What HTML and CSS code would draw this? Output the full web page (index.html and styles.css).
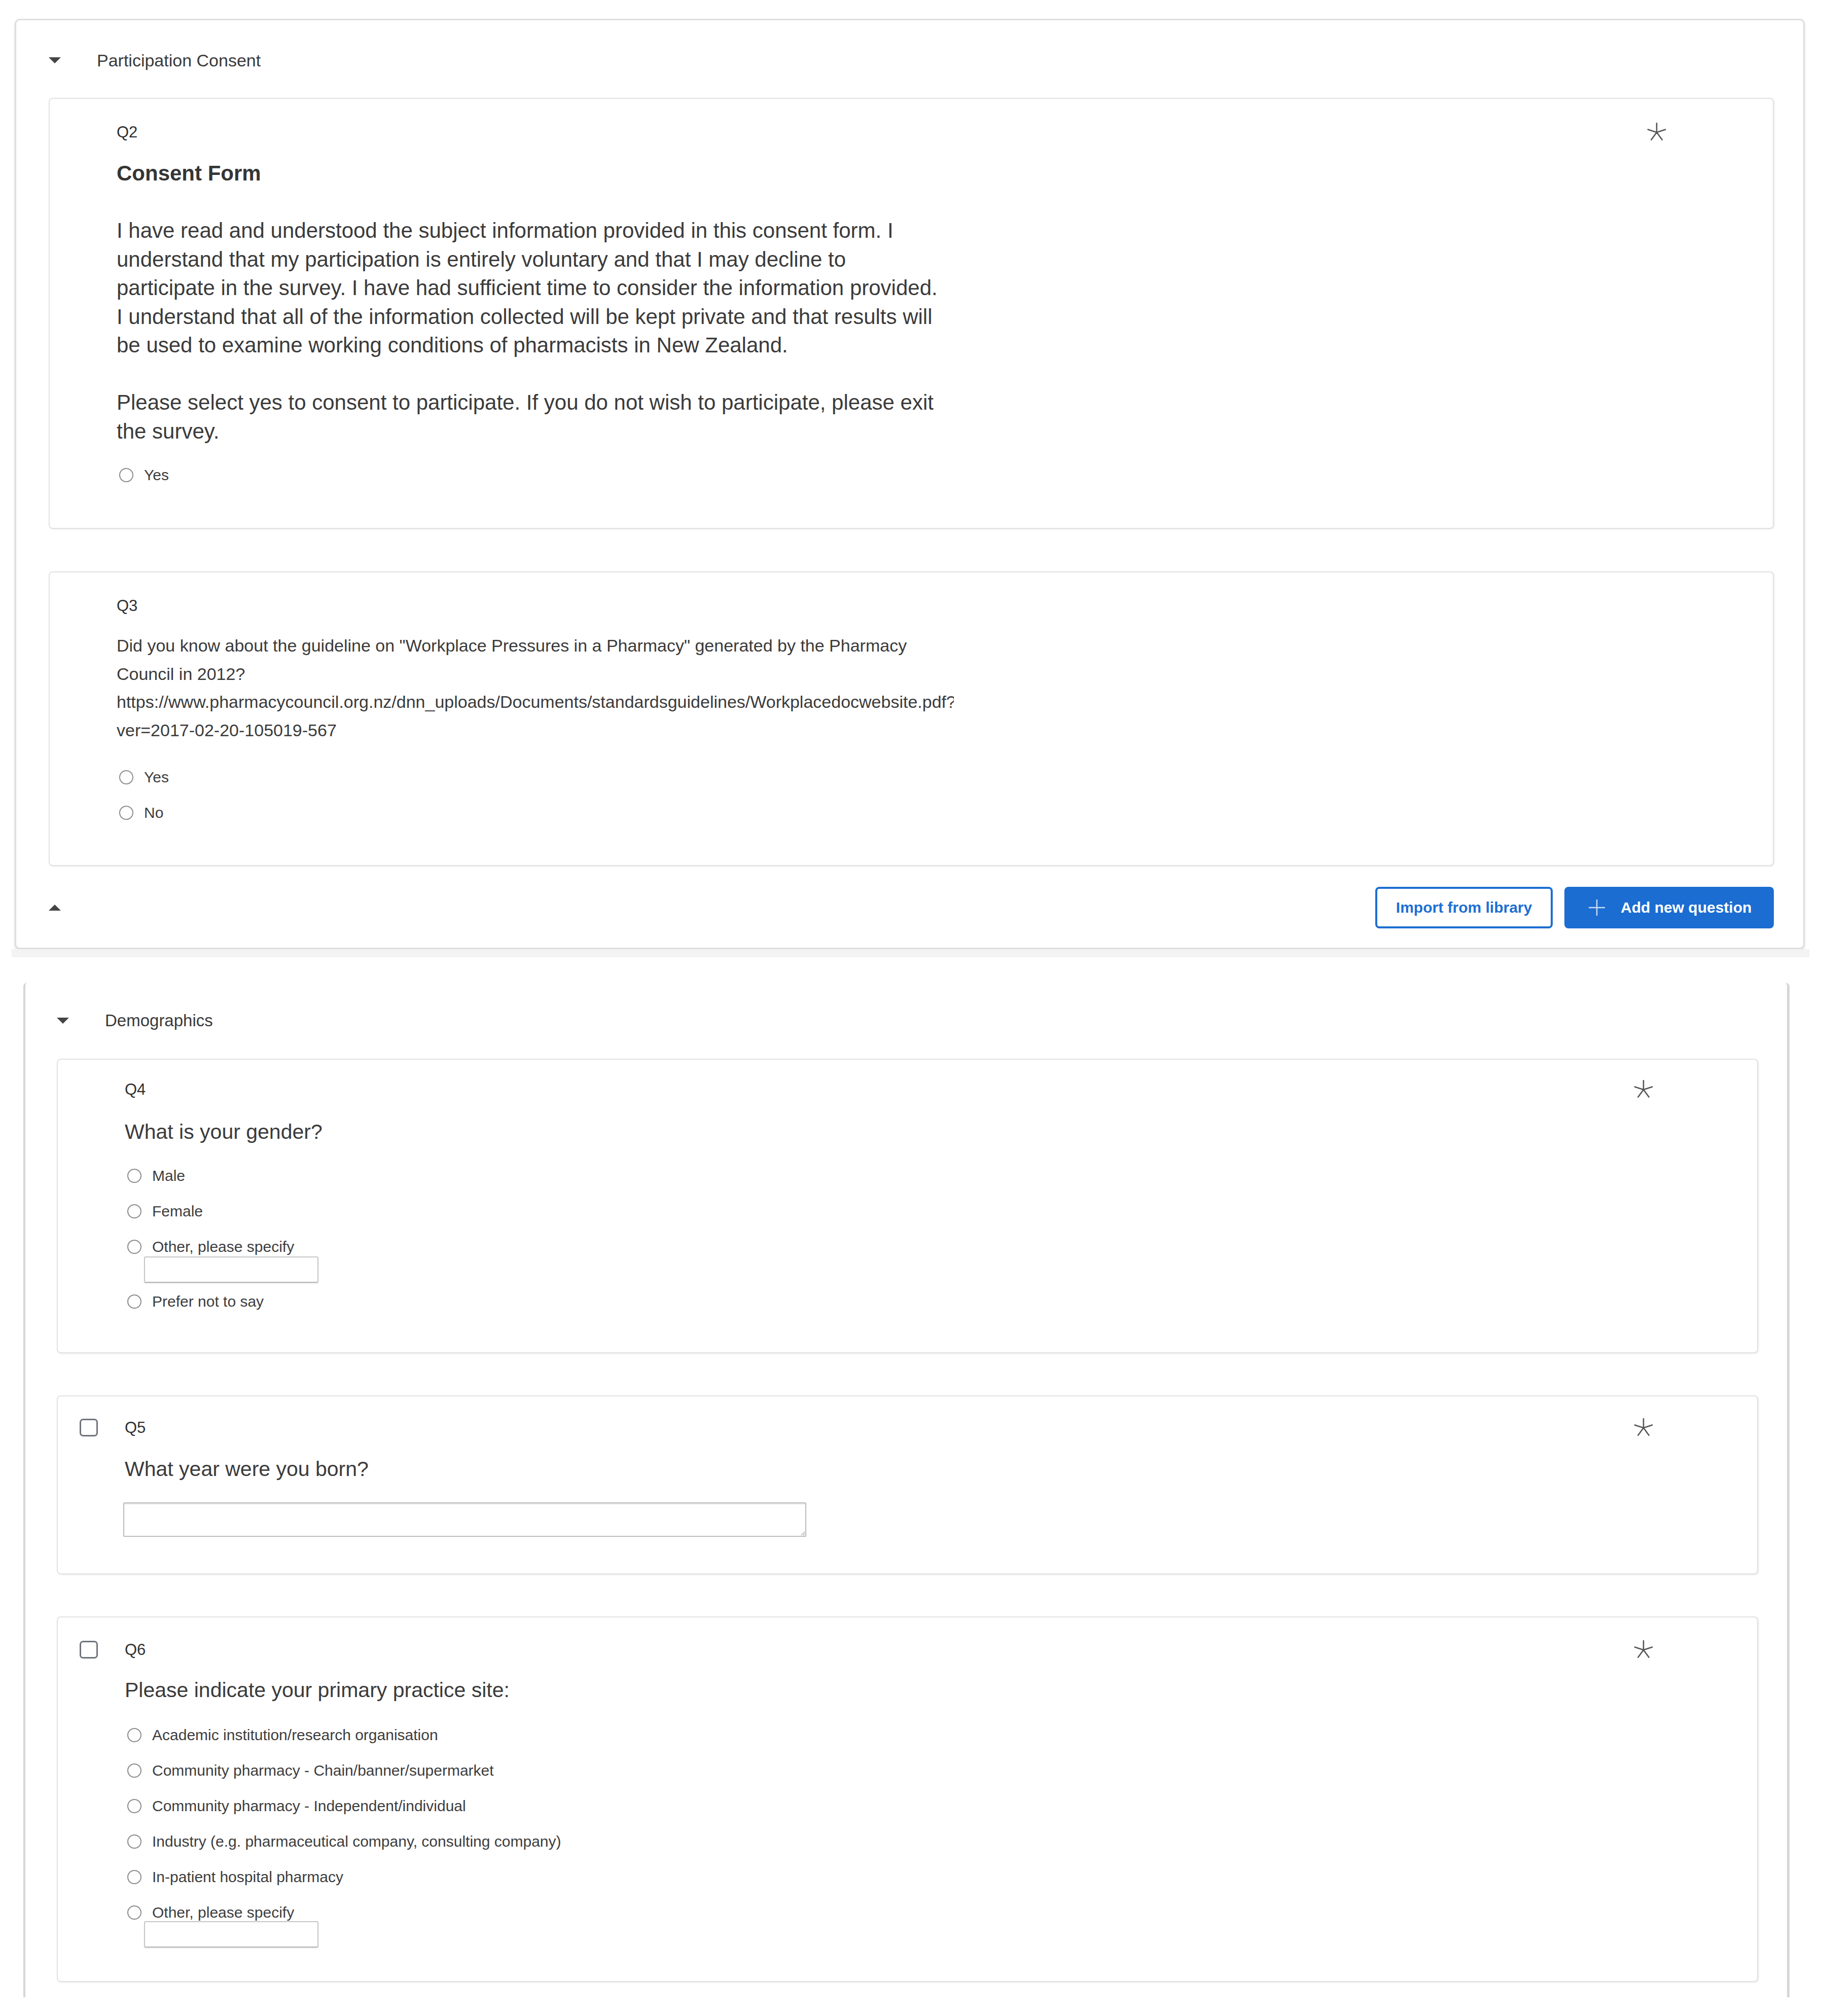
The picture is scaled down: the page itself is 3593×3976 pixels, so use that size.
FILE: index.html
```html
<!DOCTYPE html>
<html lang="en">
<head>
<meta charset="utf-8">
<title>Survey builder</title>
<link rel="stylesheet" href="styles.css">
</head>
<body>
<div class="shot shot-top">
  <section class="block block-top">
    <div class="sec-head">
      <svg class="caret" width="24" height="12" viewBox="0 0 24 12"><polygon points="0,0 24,0 12,12"/></svg>
      <span class="sec-title">Participation Consent</span>
    </div>

    <div class="qcard q2">
      <div class="gutter"></div>
      <div class="qhead">
        <span class="qlabel">Q2</span>
        <svg class="req" width="38" height="38" viewBox="0 0 38 38"><path d="M19 19V1M19 19L36.1 13.4M19 19L29.6 33.6M19 19L8.4 33.6M19 19L1.9 13.4"/></svg>
      </div>
      <div class="qbody">
        <div class="consent">
          <div class="consent-title">Consent Form</div>
          <div class="blank"></div>
          <div>I have read and understood the subject information provided in this consent form. I<br>understand that my participation is entirely voluntary and that I may decline to<br>participate in the survey. I have had sufficient time to consider the information provided.<br>I understand that all of the information collected will be kept private and that results will<br>be used to examine working conditions of pharmacists in New Zealand.</div>
          <div class="blank"></div>
          <div>Please select yes to consent to participate. If you do not wish to participate, please exit<br>the survey.</div>
        </div>
        <div class="opts opts-q2">
          <label class="opt"><span class="radio"></span><span>Yes</span></label>
        </div>
      </div>
    </div>

    <div class="qcard q3">
      <div class="gutter"></div>
      <div class="qhead">
        <span class="qlabel">Q3</span>
      </div>
      <div class="qbody">
        <div class="qtext-sm">Did you know about the guideline on "Workplace Pressures in a Pharmacy" generated by the Pharmacy<br>Council in 2012?<br>https://www.pharmacycouncil.org.nz/dnn_uploads/Documents/standardsguidelines/Workplacedocwebsite.pdf?<br>ver=2017-02-20-105019-567</div>
        <div class="opts opts-q3">
          <label class="opt"><span class="radio"></span><span>Yes</span></label>
          <label class="opt"><span class="radio"></span><span>No</span></label>
        </div>
      </div>
    </div>

    <div class="sec-foot">
      <svg class="caret" width="24" height="12" viewBox="0 0 24 12"><polygon points="0,12 24,12 12,0"/></svg>
      <div class="btns">
        <button class="btn btn-outline">Import from library</button>
        <button class="btn btn-primary"><svg class="plus" width="32" height="32" viewBox="0 0 32 32"><path d="M16 0V32M0 16H32"/></svg><span>Add new question</span></button>
      </div>
    </div>
  </section>
  <div class="shot-edge"></div>
</div>

<div class="shot shot-bottom">
  <section class="block block-bottom">
    <div class="sec-head sec-head-b">
      <svg class="caret" width="24" height="12" viewBox="0 0 24 12"><polygon points="0,0 24,0 12,12"/></svg>
      <span class="sec-title">Demographics</span>
    </div>

    <div class="qcard q4">
      <div class="gutter"></div>
      <div class="qhead">
        <span class="qlabel">Q4</span>
        <svg class="req" width="38" height="38" viewBox="0 0 38 38"><path d="M19 19V1M19 19L36.1 13.4M19 19L29.6 33.6M19 19L8.4 33.6M19 19L1.9 13.4"/></svg>
      </div>
      <div class="qbody">
        <div class="qtext-lg">What is your gender?</div>
        <div class="opts opts-q4">
          <label class="opt"><span class="radio"></span><span>Male</span></label>
          <label class="opt"><span class="radio"></span><span>Female</span></label>
          <label class="opt"><span class="radio"></span><span>Other, please specify</span></label>
          <div class="other-box"></div>
          <label class="opt opt-after-box"><span class="radio"></span><span>Prefer not to say</span></label>
        </div>
      </div>
    </div>

    <div class="qcard q5">
      <div class="gutter"><span class="check"></span></div>
      <div class="qhead">
        <span class="qlabel">Q5</span>
        <svg class="req" width="38" height="38" viewBox="0 0 38 38"><path d="M19 19V1M19 19L36.1 13.4M19 19L29.6 33.6M19 19L8.4 33.6M19 19L1.9 13.4"/></svg>
      </div>
      <div class="qbody">
        <div class="qtext-lg">What year were you born?</div>
        <textarea class="year-input" aria-label="Year"></textarea>
      </div>
    </div>

    <div class="qcard q6">
      <div class="gutter"><span class="check"></span></div>
      <div class="qhead">
        <span class="qlabel">Q6</span>
        <svg class="req" width="38" height="38" viewBox="0 0 38 38"><path d="M19 19V1M19 19L36.1 13.4M19 19L29.6 33.6M19 19L8.4 33.6M19 19L1.9 13.4"/></svg>
      </div>
      <div class="qbody">
        <div class="qtext-lg">Please indicate your primary practice site:</div>
        <div class="opts opts-q6">
          <label class="opt"><span class="radio"></span><span>Academic institution/research organisation</span></label>
          <label class="opt"><span class="radio"></span><span>Community pharmacy - Chain/banner/supermarket</span></label>
          <label class="opt"><span class="radio"></span><span>Community pharmacy - Independent/individual</span></label>
          <label class="opt"><span class="radio"></span><span>Industry (e.g. pharmaceutical company, consulting company)</span></label>
          <label class="opt"><span class="radio"></span><span>In-patient hospital pharmacy</span></label>
          <label class="opt"><span class="radio"></span><span>Other, please specify</span></label>
          <div class="other-box other-box-q6"></div>
        </div>
      </div>
    </div>
  </section>
</div>
</body>
</html>
```

FILE: styles.css
```css
* { box-sizing: border-box; }
html, body { margin: 0; padding: 0; background: #ffffff; }
body {
  width: 3593px;
  font-family: "Liberation Sans", Arial, sans-serif;
  color: #3e3e3e;
}

/* ---------- outer blocks ---------- */
.shot-top { padding-top: 37px; }

.block { background: #fff; }

.block-top {
  margin-left: 29px;
  width: 3530px;
  border: 3px solid #dedede;
  border-radius: 10px;
  box-shadow: 0 3px 4px rgba(0, 0, 0, 0.13);
  padding: 0 58px 0 64px;
}

.shot-edge {
  margin-left: 23px;
  width: 3545px;
  height: 16px;
  background: #f3f3f3;
}

.block-bottom {
  margin-top: 50px;
  margin-left: 46px;
  width: 3483px;
  border-left: 4px solid #d6d6d6;
  border-right: 5px solid #d6d6d6;
  border-top-left-radius: 8px;
  border-top-right-radius: 8px;
  padding: 0 57px 30px 62px;
}

/* ---------- section header / footer ---------- */
.sec-head {
  height: 153px;
  padding-top: 5px;
  display: flex;
  align-items: center;
  gap: 71px;
}
.sec-head-b { height: 150px; padding-top: 0; }

.caret { display: block; fill: #444; flex: none; }

.sec-title {
  font-size: 34px;
  color: #3a3a3a;
}
.sec-head-b .sec-title { font-size: 33px; }

.sec-foot {
  display: flex;
  align-items: center;
  justify-content: space-between;
  padding: 41px 0 38px 0;
}

.btns { display: flex; gap: 23px; }

.btn {
  height: 82px;
  border-radius: 8px;
  font-family: "Liberation Sans", Arial, sans-serif;
  font-size: 30px;
  font-weight: 700;
  display: flex;
  align-items: center;
  justify-content: center;
  padding: 0;
  cursor: pointer;
}
.btn-outline {
  width: 350px;
  background: #fff;
  border: 4px solid #1d6fd2;
  color: #1d6fd2;
}
.btn-primary {
  width: 413px;
  background: #1b6dd1;
  border: none;
  color: #fff;
  justify-content: flex-start;
  padding-left: 48px;
  gap: 31px;
}
.plus { display: block; stroke: rgba(255, 255, 255, 0.75); stroke-width: 2.5; fill: none; }

/* ---------- question cards ---------- */
.qcard {
  display: grid;
  grid-template-columns: 132px 1fr;
  background: #fff;
  border: 2px solid #e3e3e3;
  border-radius: 8px;
  box-shadow: 1px 1px 3px rgba(0, 0, 0, 0.10);
  padding-right: 210px;
}
.block-bottom .qcard { padding-right: 205px; }

.gutter { grid-column: 1; grid-row: 1; display: flex; align-items: center; }
.qhead {
  grid-column: 2;
  grid-row: 1;
  height: 40px;
  display: flex;
  align-items: center;
  justify-content: space-between;
}
.qbody { grid-column: 2; grid-row: 2; }

.qlabel { font-size: 31px; color: #2f2f2f; }

.req { display: block; stroke: #555; stroke-width: 2.6; stroke-linecap: round; fill: none; }

.check {
  display: block;
  margin-left: 43px;
  width: 36px;
  height: 35px;
  border: 3px solid #70737b;
  border-radius: 7px;
  background: #fff;
}

/* question texts */
.consent {
  margin-top: 33px;
  font-size: 42px;
  line-height: 56.5px;
  white-space: nowrap;
  color: #3b3b3b;
}
.consent-title { font-weight: 700; font-size: 42px; color: #353535; }
.blank { height: 56.5px; }

.qtext-sm {
  margin-top: 31px;
  width: 1651px;
  overflow: hidden;
  white-space: nowrap;
  font-size: 34px;
  line-height: 55.7px;
  color: #3b3b3b;
}

.qtext-lg {
  font-size: 41px;
  line-height: 56px;
  color: #3b3b3b;
}

/* options */
.opt {
  display: flex;
  align-items: center;
  gap: 21px;
  height: 70px;
  font-size: 30px;
  color: #3d3d3d;
}
.radio {
  flex: none;
  margin-left: 5px;
  width: 28px;
  height: 28px;
  border: 2px solid #8d8d8d;
  border-radius: 50%;
  background: #fff;
}

.other-box {
  margin-top: -16px;
  margin-left: 38px;
  width: 344px;
  height: 52px;
  border: 2px solid #c6c6c6;
  border-bottom-color: #b3b3b3;
  border-radius: 3px;
  box-shadow: 0 2px 2px rgba(0, 0, 0, 0.08);
  background: #fff;
}
.other-box-q6 { margin-top: -18px; }
.opt-after-box { margin-top: 2px; }

.year-input {
  display: block;
  margin-top: 38px;
  margin-left: -3px;
  width: 1347px;
  height: 68px;
  border: 2px solid #bdbdbd;
  border-radius: 2px;
  box-shadow: inset 0 2px 2px rgba(0, 0, 0, 0.10);
  background: #fff;
  resize: vertical;
  font: inherit;
}

/* per-question vertical rhythm */
.q2 { padding-top: 46px; padding-bottom: 69px; }
.opts-q2 { margin-top: 23px; }

.q3 { margin-top: 84px; padding-top: 46px; padding-bottom: 68px; }
.opts-q3 { margin-top: 29px; }

.q4 { padding-top: 39px; padding-bottom: 65px; }
.q4 .qtext-lg { margin-top: 35px; }
.opts-q4 { margin-top: 24px; }

.q5 { margin-top: 83px; padding-top: 42px; padding-bottom: 72px; }
.q5 .qtext-lg { margin-top: 33px; }

.q6 { margin-top: 83px; padding-top: 44px; padding-bottom: 66px; }
.q6 .qtext-lg { margin-top: 31px; }
.opts-q6 { margin-top: 26px; }
```
